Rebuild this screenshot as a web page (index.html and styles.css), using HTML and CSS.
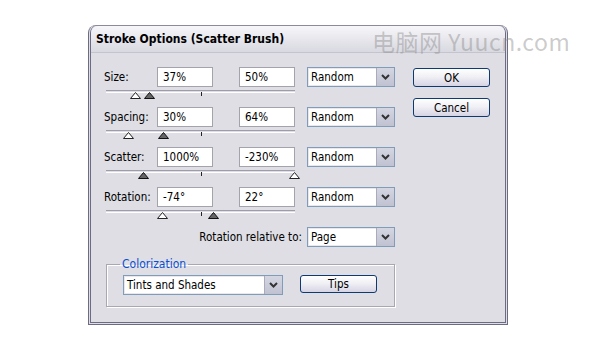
FILE: index.html
```html
<!DOCTYPE html>
<html lang="en">
<head>
    <meta charset="UTF-8">
    <title>Stroke Options (Scatter Brush)</title>
    <link rel="stylesheet" href="styles.css">
</head>
<body>
    <div class="dialog">
        <div class="titlebar">Stroke Options (Scatter Brush)</div>
        <div class="content">
            <div class="main">
                <div class="param">
                    <div class="fields">
                        <span class="label">Size:</span>
                        <span class="field">37%</span>
                        <span class="field">50%</span>
                        <span class="select"><span class="value">Random</span><span class="arrow"><svg width="9" height="6" viewBox="0 0 9 6"><path d="M1 1 L4.5 4.5 L8 1" fill="none" stroke="#333" stroke-width="2"/></svg></span></span>
                    </div>
                    <div class="slider">
                        <span class="tick"></span>
                        <svg class="thumb" style="left:24px" width="11" height="7" viewBox="0 0 11 7"><polygon points="5.5,0.5 10.5,6.5 0.5,6.5" fill="#fff" stroke="#222"/></svg>
                        <svg class="thumb" style="left:38px" width="11" height="7" viewBox="0 0 11 7"><polygon points="5.5,0.5 10.5,6.5 0.5,6.5" fill="#666" stroke="#111"/></svg>
                    </div>
                </div>
                <div class="param">
                    <div class="fields">
                        <span class="label">Spacing:</span>
                        <span class="field">30%</span>
                        <span class="field">64%</span>
                        <span class="select"><span class="value">Random</span><span class="arrow"><svg width="9" height="6" viewBox="0 0 9 6"><path d="M1 1 L4.5 4.5 L8 1" fill="none" stroke="#333" stroke-width="2"/></svg></span></span>
                    </div>
                    <div class="slider">
                        <span class="tick"></span>
                        <svg class="thumb" style="left:17px" width="11" height="7" viewBox="0 0 11 7"><polygon points="5.5,0.5 10.5,6.5 0.5,6.5" fill="#fff" stroke="#222"/></svg>
                        <svg class="thumb" style="left:52px" width="11" height="7" viewBox="0 0 11 7"><polygon points="5.5,0.5 10.5,6.5 0.5,6.5" fill="#666" stroke="#111"/></svg>
                    </div>
                </div>
                <div class="param">
                    <div class="fields">
                        <span class="label">Scatter:</span>
                        <span class="field">1000%</span>
                        <span class="field">-230%</span>
                        <span class="select"><span class="value">Random</span><span class="arrow"><svg width="9" height="6" viewBox="0 0 9 6"><path d="M1 1 L4.5 4.5 L8 1" fill="none" stroke="#333" stroke-width="2"/></svg></span></span>
                    </div>
                    <div class="slider">
                        <span class="tick"></span>
                        <svg class="thumb" style="left:32px" width="11" height="7" viewBox="0 0 11 7"><polygon points="5.5,0.5 10.5,6.5 0.5,6.5" fill="#666" stroke="#111"/></svg>
                        <svg class="thumb" style="left:183px" width="11" height="7" viewBox="0 0 11 7"><polygon points="5.5,0.5 10.5,6.5 0.5,6.5" fill="#fff" stroke="#222"/></svg>
                    </div>
                </div>
                <div class="param">
                    <div class="fields">
                        <span class="label">Rotation:</span>
                        <span class="field">-74°</span>
                        <span class="field">22°</span>
                        <span class="select"><span class="value">Random</span><span class="arrow"><svg width="9" height="6" viewBox="0 0 9 6"><path d="M1 1 L4.5 4.5 L8 1" fill="none" stroke="#333" stroke-width="2"/></svg></span></span>
                    </div>
                    <div class="slider">
                        <span class="tick"></span>
                        <svg class="thumb" style="left:51px" width="11" height="7" viewBox="0 0 11 7"><polygon points="5.5,0.5 10.5,6.5 0.5,6.5" fill="#fff" stroke="#222"/></svg>
                        <svg class="thumb" style="left:102px" width="11" height="7" viewBox="0 0 11 7"><polygon points="5.5,0.5 10.5,6.5 0.5,6.5" fill="#666" stroke="#111"/></svg>
                    </div>
                </div>
                <div class="relative-row">
                    <span class="label-right">Rotation relative to:</span>
                    <span class="select"><span class="value">Page</span><span class="arrow"><svg width="9" height="6" viewBox="0 0 9 6"><path d="M1 1 L4.5 4.5 L8 1" fill="none" stroke="#333" stroke-width="2"/></svg></span></span>
                </div>
                <fieldset class="group">
                    <legend>Colorization</legend>
                    <div class="group-row">
                        <span class="select wide"><span class="value">Tints and Shades</span><span class="arrow"><svg width="9" height="6" viewBox="0 0 9 6"><path d="M1 1 L4.5 4.5 L8 1" fill="none" stroke="#333" stroke-width="2"/></svg></span></span>
                        <button class="btn tips">Tips</button>
                    </div>
                </fieldset>
            </div>
            <div class="buttons">
                <button class="btn">OK</button>
                <button class="btn">Cancel</button>
            </div>
        </div>
    </div>
    <div class="watermark">电脑网 Yuucn.com</div>
</body>
</html>
```

FILE: styles.css
```css
body {
    margin: 0;
    padding: 0;
    background-color: #ffffff;
    font-family: "DejaVu Sans", "Liberation Sans", sans-serif;
    font-stretch: condensed;
    font-size: 11.5px;
    color: #000;
}

.dialog {
    margin: 25px 0 0 88px;
    width: 414px;
    border: 3px double #6b6b84;
    border-top: 1px solid #8a8a9e;
    border-radius: 8px 8px 0 0;
    background-color: #dedee4;
}

.titlebar {
    height: 26px;
    line-height: 26px;
    padding-left: 5px;
    font-size: 12px;
    font-weight: bold;
    border-radius: 7px 7px 0 0;
    background: linear-gradient(#f7f7fa, #e4e4ea 60%, #d9d9e1);
    border-bottom: 1px solid #c4c4ce;
}

.content {
    display: flex;
    padding: 14px 0 15px 13px;
}

.main {
    width: 291px;
}

.param {
    height: 40px;
}

.fields {
    display: flex;
    align-items: center;
    height: 20px;
}

.label {
    width: 53px;
}

.field {
    box-sizing: border-box;
    width: 56px;
    height: 20px;
    line-height: 18px;
    padding-left: 5px;
    border: 1px solid #a3a3ab;
    background-color: #fff;
    margin-right: 26px;
}

.field + .field {
    margin-right: 12px;
}

.select {
    box-sizing: border-box;
    display: flex;
    width: 88px;
    height: 20px;
    border: 1px solid #7f9db9;
    background-color: #fff;
}

.select .value {
    flex: 1;
    padding-left: 2px;
    border: 1px solid #e8e8ee;
    border-right: none;
    line-height: 16px;
}

.select .arrow {
    width: 17px;
    display: flex;
    align-items: center;
    justify-content: center;
    background: linear-gradient(#d4d6e2, #c0c2d2);
    border-left: 1px solid #a9abbd;
}

.slider {
    position: relative;
    margin: 3px 0 0 2px;
    width: 189px;
    height: 1px;
    border-top: 1px solid #9d9daa;
    border-bottom: 1px solid #ffffff;
}

.tick {
    position: absolute;
    left: 95px;
    top: 1px;
    width: 1px;
    height: 4px;
    background-color: #222;
}

.thumb {
    position: absolute;
    top: 1px;
}

.relative-row {
    display: flex;
    justify-content: flex-end;
    align-items: center;
    height: 20px;
}

.label-right {
    margin-right: 5px;
}

.group {
    margin: 10px 0 0 2px;
    padding: 4px 16px 11px 16px;
    width: 255px;
    border: 1px solid #a8a8b4;
    box-shadow: 1px 1px 0 #fff, inset 1px 1px 0 #fff;
}

.group legend {
    padding: 0 2px;
    margin-left: -3px;
    color: #0b4fd1;
    font-size: 12px;
}

.group-row {
    display: flex;
    align-items: flex-start;
}

.select.wide {
    width: 160px;
    margin-right: 17px;
}

.buttons {
    display: flex;
    flex-direction: column;
    margin: 1px 0 0 18px;
}

.btn {
    box-sizing: border-box;
    width: 77px;
    height: 19px;
    padding: 0;
    margin-bottom: 11px;
    font-family: inherit;
    font-stretch: condensed;
    font-size: 11.5px;
    color: #000;
    border: 1px solid #0e3a70;
    border-radius: 3px;
    background: linear-gradient(#ffffff, #f0f0f5 45%, #d6d4e4);
}

.btn.tips {
    margin: 0;
    height: 18px;
}

.watermark {
    position: absolute;
    top: 24px;
    left: 372px;
    font-family: "Noto Sans CJK SC", "DejaVu Sans", sans-serif;
    font-size: 23px;
    color: rgba(140, 140, 140, 0.45);
    letter-spacing: 0.5px;
}
```
